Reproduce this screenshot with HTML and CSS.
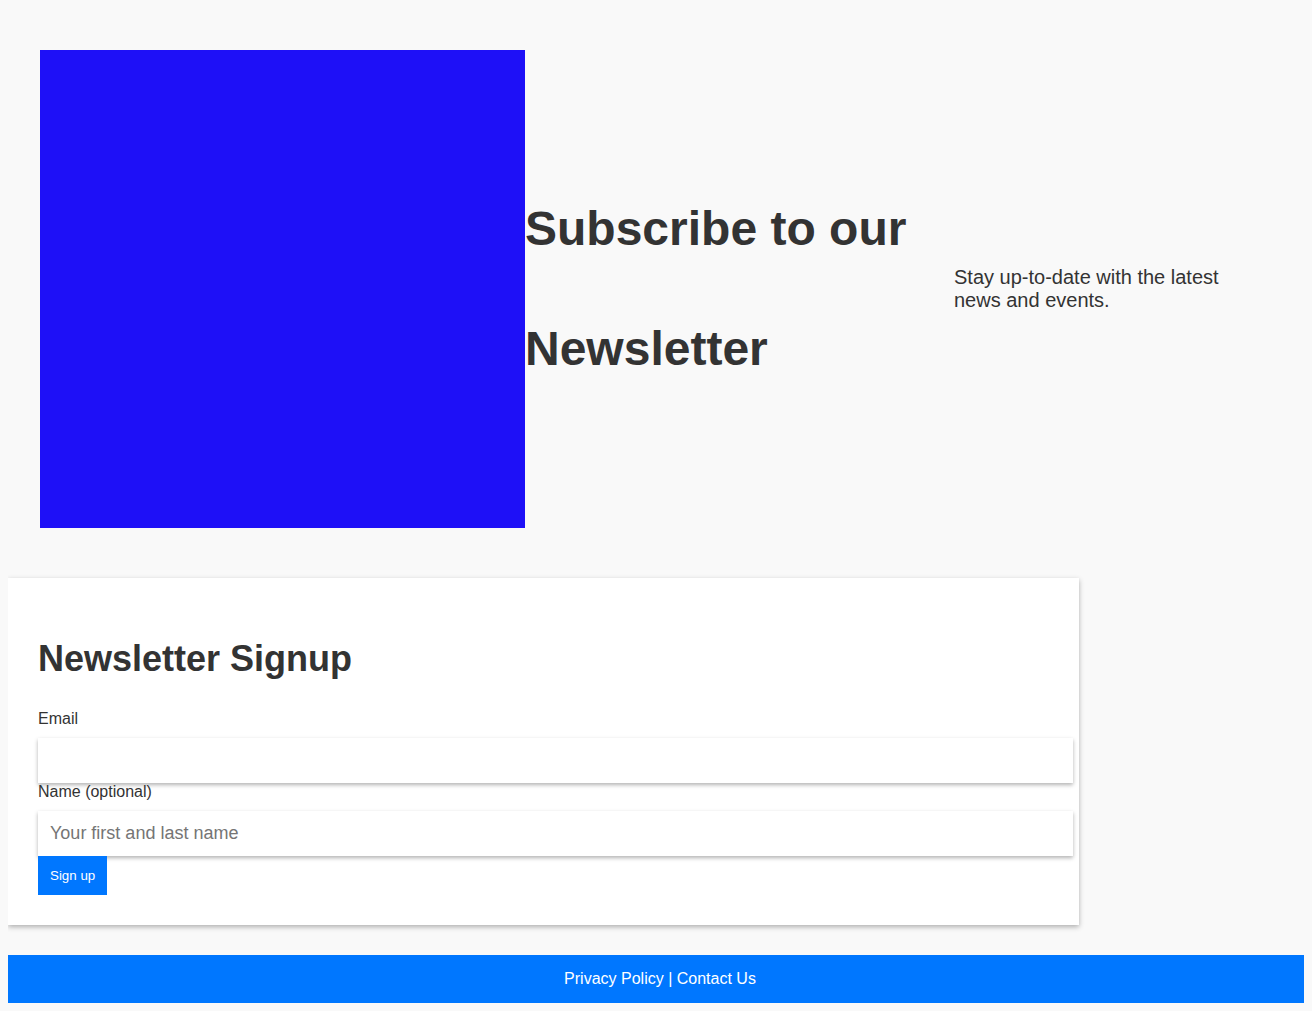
FILE: index.html
```html
<!DOCTYPE html>
<html lang="en">
<head>
<meta charset="utf-8">
<title>Newsletter</title>
<link rel="stylesheet" href="styles.css">
</head>
<body>
  <section class="hero">
    <div class="hero-image" role="img" aria-label="Newsletter image"></div>
    <h1 class="hero-title">Subscribe to our Newsletter</h1>
    <p class="hero-text">Stay up-to-date with the latest news and events.</p>
  </section>
  <section class="card">
    <h2 class="card-title">Newsletter Signup</h2>
    <form class="signup">
      <label class="field-label" for="email">Email</label>
      <input class="field-input" id="email" type="email">
      <label class="field-label" for="name">Name (optional)</label>
      <input class="field-input" id="name" type="text" placeholder="Your first and last name">
      <button class="btn" type="button">Sign up</button>
    </form>
  </section>
  <footer class="footer">
    <a class="footer-link" href="#">Privacy Policy</a> | <a class="footer-link" href="#">Contact Us</a>
  </footer>
</body>
</html>
```

FILE: styles.css
```css
body {
  margin: 8px;
  background: #f9f9f9;
  color: #333;
  font-family: "Liberation Sans", Arial, sans-serif;
}

.hero {
  display: flex;
  align-items: center;
  padding: 42px 32px 50px;
}

.hero-image {
  flex: 0 0 485px;
  height: 478px;
  background: #1e10f7;
}

.hero-title {
  flex: 0 0 429px;
  margin: 32px 0;
  font-size: 48px;
  line-height: 2.5;
  font-weight: bold;
}

.hero-text {
  flex: 0 0 300px;
  margin: 0;
  font-size: 20px;
  line-height: 23px;
}

.card {
  width: 1011px;
  padding: 30px;
  margin-bottom: 30px;
  background: #fff;
  box-shadow: 0 2px 5px rgba(0, 0, 0, 0.3);
}

.card-title {
  margin: 30px 0;
  font-size: 36px;
  font-weight: bold;
}

.signup {
  margin: 0;
}

.field-label {
  display: block;
  font-size: 16px;
  line-height: 18px;
  margin-bottom: 10px;
}

.field-input {
  display: block;
  width: 100%;
  padding: 12px;
  border: none;
  margin: 0;
  font-family: "Liberation Sans", Arial, sans-serif;
  font-size: 18px;
  line-height: 21px;
  color: #333;
  background: #fff;
  box-shadow: 0 2px 4px rgba(0, 0, 0, 0.3);
  outline: none;
}

.field-input::placeholder {
  color: #757575;
}

.btn {
  display: block;
  padding: 12px;
  border: none;
  background: #0077ff;
  color: #fff;
  font-family: "Liberation Sans", Arial, sans-serif;
  font-size: 13.333px;
  line-height: 15px;
  cursor: pointer;
}

.footer {
  margin-right: -8px;
  padding: 15px 4px;
  background: #0077ff;
  color: #fff;
  text-align: center;
  font-size: 16px;
  line-height: 18px;
}

.footer-link {
  color: #fff;
  text-decoration: none;
}
```
